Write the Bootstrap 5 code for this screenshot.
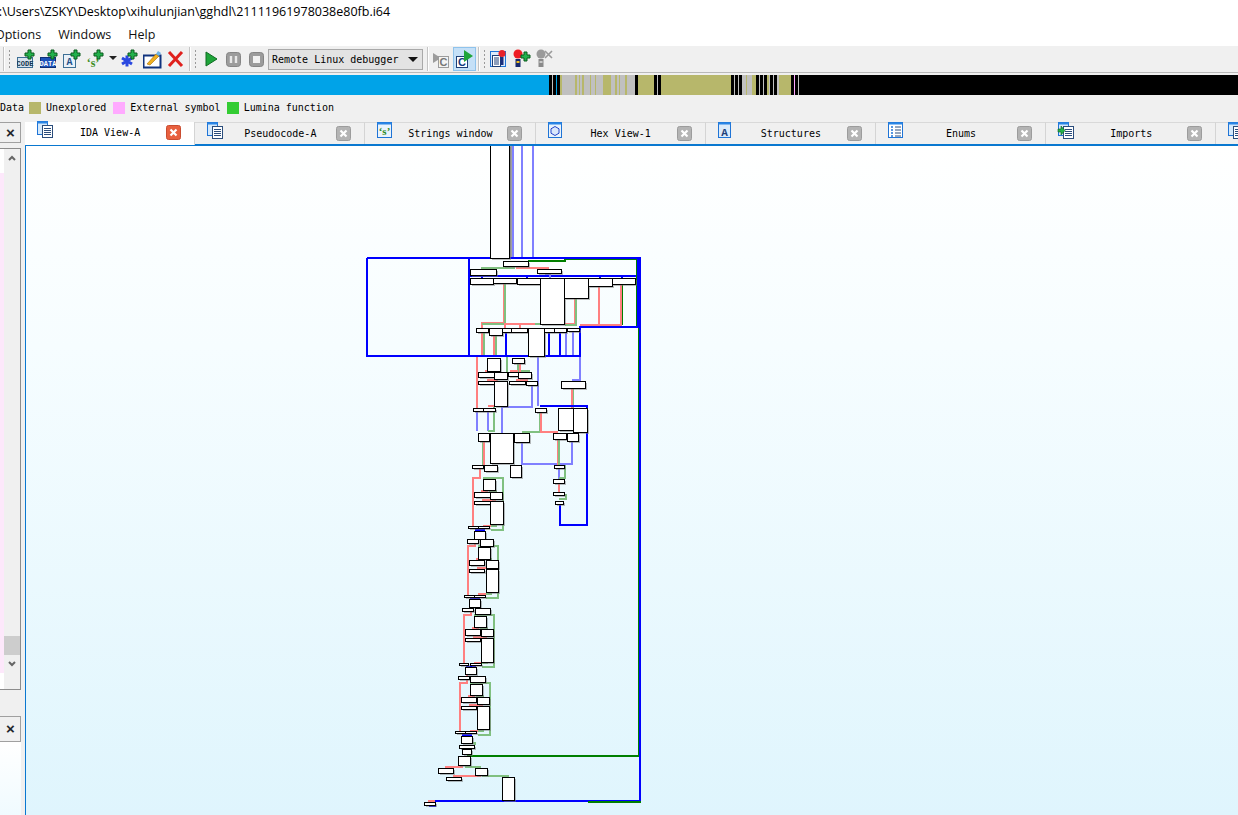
<!DOCTYPE html>
<html lang="en">
<head>
    <meta charset="UTF-8">
    <meta name="viewport" content="width=device-width, initial-scale=1.0">
    <title>IDA - 21111961978038e80fb.i64</title>
    <link href="https://cdn.jsdelivr.net/npm/bootstrap@5.3.0/dist/css/bootstrap.min.css" rel="stylesheet">
    <style>
        html, body { height: 815px; overflow: hidden; background: #f0f0f0; }
        .app-shell { height: 815px; width: 1238px; overflow: hidden; }
        .title-row { height: 24px; background: #fff; font: 12.5px/24px "Open Sans", sans-serif; color: #000; white-space: nowrap; margin-left: -9px; }
        .menu-row { height: 21px; background: #fff; font: 12.5px/21px "Open Sans", sans-serif; color: #111; margin-left: -5px; gap: 17px; }
        .tool-row { height: 28px; background: #f0f0f0; border-top: 1px solid #fff; border-bottom: 1px solid #b9b9b9; padding-left: 3px; }
        .tool-sep { width: 2px; height: 24px; border-left: 1px solid #c4c4c4; border-right: 1px solid #fff; flex: none; }
        .tool-grip { width: 3px; height: 20px; flex: none; margin: 0 2px 0 3px; background-image: radial-gradient(#9a9a9a 1px, transparent 1px); background-size: 3px 4px; }
        .tool-ic { flex: none; display: block; }
        .tool-ic-gap { margin-left: 4px; }
        .tool-ic-play { margin-left: 6px; }
        .tool-ic-dbg { margin-left: 8px; }
        .tool-ic-bp { margin-left: 5px; }
        .tool-ic-c { margin-left: 3px; }
        .tool-ic-first { margin-left: 2px; }
        .tool-ic-plusbp { margin-left: 6px; }
        .debug-combo { width: 155px; height: 21px; flex: none; margin-left: 4px; background: #e3e3e3; border: 1px solid #a9a9a9; font: 10px/19px "DejaVu Sans Mono", monospace; padding-left: 3px; color: #000; position: relative; }
        .debug-combo::after { content: ""; position: absolute; right: 4px; top: 7px; border: 5px solid transparent; border-top: 5px solid #111; border-bottom: 0; }
        .drop-arrow { width: 0; height: 0; flex: none; border: 4px solid transparent; border-top: 4px solid #222; border-bottom: 0; margin: 0 3px 2px 4px; }
        .sel-ic { background: #c5e0f7; border: 1px solid #8fc3ec; height: 24px; width: 23px; flex: none; margin-left: 3px; }
        .sel-sep { margin-left: 2px; }
        .nav-strip { display: block; margin-top: 2px; height: 20px; width: 1238px; }
        .legend-row { height: 27px; font: 10px/24px "DejaVu Sans Mono", monospace; color: #000; padding-bottom: 1px; }
        .legend-box { width: 12px; height: 12px; flex: none; margin-left: 6px; margin-right: 5px; }
        .legend-tan { background: #b7b76b; margin-left: 5px; }
        .legend-pink { background: #ffaaff; margin-left: 7px; }
        .legend-lime { background: #33cc33; }
        .work-row { height: 693px; }
        .side-col { width: 25px; flex: none; }
        .side-close { width: 21px; height: 21px; border: 1px solid #a0a0a0; border-left: 0; background: #f0f0f0; font: 700 15px/19px "Liberation Sans", sans-serif; text-align: center; padding-left: 1px; }
        .side-panel { width: 21px; height: 542px; margin-top: 5px; border: 1px solid #8c8c8c; border-left: 0; background: #fff; }
        .side-pink { width: 4px; margin-top: 24px; height: 500px; background: #fde8fb; flex: none; }
        .side-scroll { width: 16px; flex: none; background: #f0f0f0; height: 100%; position: relative; }
        .side-thumb { position: absolute; top: 487px; left: 0; right: 0; height: 19px; background: #cdcdcd; }
        .side-chev { position: absolute; left: 4px; display: block; }
        .side-chev-up { top: 6px; }
        .side-chev-down { top: 512px; }
        .side-close-b { margin-top: 26px; height: 26px; line-height: 24px; }
        .side-foot { width: 21px; height: 73px; background: linear-gradient(#fff, #f0fbff); }
        .tab-row { height: 22px; }
        .tab-item { width: 170.2px; height: 22px; flex: none; background: #f0f0f0; border-right: 1px solid #d4d4d4; border-top: 1px solid #d9d9d9; font: 10px/21px "DejaVu Sans Mono", monospace; color: #000; }
        .tab-item.tab-on { background: #fff; border-top: 0; height: 23px; position: relative; z-index: 2; }
        .tab-ic { margin-left: 11px; margin-top: -1px; flex: none; width: 18px; height: 17px; }
        .tab-name { flex: 1 1 auto; text-align: center; white-space: nowrap; }
        .tab-x { width: 15px; height: 15px; flex: none; margin-right: 13px; margin-top: 3px; }
        .graph-pane { height: 671px; width: 1213px; border-top: 2px solid #0a78d0; border-left: 1px solid #0a78d0; background: linear-gradient(#fff 0, #f6fdff 30%, #dff5fd 100%); }
        .graph-svg { display: block; }
    </style>
</head>
<body>
    <svg width="0" height="0" class="position-absolute">
        <defs>
            <symbol id="i-plus" viewBox="0 0 11 11"><path d="M4 1h3v3h3v3H7v3H4V7H1V4h3z" fill="#22b14c" stroke="#0a5a1c" stroke-width="1"/></symbol>
            <symbol id="i-page" viewBox="0 0 18 17">
                <rect x="1.5" y="0.5" width="10" height="13" fill="#d5e9fb" stroke="#1f74d6"/>
                <rect x="1.5" y="0.5" width="10" height="2" fill="#2a86e6"/>
                <rect x="6.5" y="4.5" width="10" height="12" fill="#fff" stroke="#2b4d7c"/>
                <path d="M8 7.5h7M8 9.5h7M8 11.5h7M8 13.5h7" stroke="#2b4d7c"/>
            </symbol>
            <symbol id="i-close" viewBox="0 0 15 15"><rect x="0.5" y="0.5" width="14" height="14" rx="2" fill="#b4b4b4" stroke="#9c9c9c"/><path d="M4.5 4.5l6 6M10.5 4.5l-6 6" stroke="#fff" stroke-width="2.2"/></symbol>
            <symbol id="i-close-on" viewBox="0 0 15 15"><rect x="0.5" y="0.5" width="14" height="14" rx="2" fill="#e8603f" stroke="#c94c30"/><path d="M4.5 4.5l6 6M10.5 4.5l-6 6" stroke="#fff" stroke-width="2.2"/></symbol>
        </defs>
    </svg>

    <div class="app-shell d-flex flex-column">
        <div class="title-row">C:\Users\ZSKY\Desktop\xihulunjian\gghdl\21111961978038e80fb.i64</div>
        <div class="menu-row d-flex"><span>Options</span><span>Windows</span><span>Help</span></div>

        <div class="tool-row d-flex align-items-center">
            <div class="tool-sep"></div>
            <div class="tool-grip"></div>
            <svg class="tool-ic tool-ic-gap" width="19" height="20" viewBox="0 0 19 20"><rect x="0.5" y="8.5" width="15" height="10" fill="#d7e3ee" stroke="#3d6f95"/><text x="8" y="16.5" font-family="Liberation Mono, monospace" font-size="7" font-weight="700" text-anchor="middle" fill="#12344f">CODE</text><use href="#i-plus" x="7" y="0" width="11" height="11"/></svg>
            <svg class="tool-ic tool-ic-gap" width="19" height="20" viewBox="0 0 19 20"><rect x="0.5" y="8.5" width="15" height="10" fill="#1c52b8" stroke="#0d2f77"/><text x="8" y="16.5" font-family="Liberation Mono, monospace" font-size="7" font-weight="700" text-anchor="middle" fill="#fff">DATA</text><use href="#i-plus" x="7" y="0" width="11" height="11"/></svg>
            <svg class="tool-ic tool-ic-gap" width="19" height="20" viewBox="0 0 19 20"><rect x="0.5" y="5.5" width="12" height="13" fill="#e8f0f8" stroke="#3d6f95"/><text x="6.5" y="16" font-family="Liberation Mono, monospace" font-size="10" font-weight="700" text-anchor="middle" fill="#1c4f88">A</text><use href="#i-plus" x="7" y="0" width="11" height="11"/></svg>
            <svg class="tool-ic tool-ic-gap" width="19" height="20" viewBox="0 0 19 20"><text x="7" y="18" font-family="Liberation Serif, serif" font-size="12" font-weight="700" text-anchor="middle" fill="#3f8f1f">‘s’</text><use href="#i-plus" x="7" y="0" width="11" height="11"/></svg>
            <div class="drop-arrow"></div>
            <svg class="tool-ic" width="19" height="20" viewBox="0 0 19 20"><path d="M7 6.5v11M2 9l10 6M12 9L2 15" stroke="#2a48e0" stroke-width="3"/><use href="#i-plus" x="7" y="0" width="11" height="11"/></svg>
            <svg class="tool-ic tool-ic-gap" width="19" height="20" viewBox="0 0 19 20"><rect x="0.5" y="6.5" width="17" height="12" fill="#fff" stroke="#10337e" stroke-width="2"/><path d="M4 15l9-10 3 2-9 9z" fill="#f0b020" stroke="#a86a00" stroke-width=".6"/><path d="M13 5l2-3 3 2-2 3z" fill="#6cb4e8"/></svg>
            <svg class="tool-ic tool-ic-gap" width="19" height="20" viewBox="0 0 19 20"><path d="M3 3l13 14M16 3L3 17" stroke="#e0201c" stroke-width="3"/></svg>
            <div class="tool-sep tool-ic-gap"></div>
            <div class="tool-grip"></div>
            <svg class="tool-ic tool-ic-play" width="13" height="16" viewBox="0 0 13 16"><path d="M1 1l11 7-11 7z" fill="#1fa53a" stroke="#0f6d22"/></svg>
            <svg class="tool-ic tool-ic-dbg" width="15" height="15" viewBox="0 0 15 15"><rect x="0.5" y="0.5" width="14" height="14" rx="3" fill="#9c9c9c" stroke="#858585"/><path d="M5 4v7M10 4v7" stroke="#e8e8e8" stroke-width="2.4"/></svg>
            <svg class="tool-ic tool-ic-dbg" width="15" height="15" viewBox="0 0 15 15"><rect x="0.5" y="0.5" width="14" height="14" rx="3" fill="#9c9c9c" stroke="#858585"/><rect x="4" y="4" width="7" height="7" fill="#f2f2f2"/></svg>
            <div class="debug-combo">Remote Linux debugger</div>
            <div class="tool-sep ms-1"></div>
            <svg class="tool-ic tool-ic-c" width="18" height="20" viewBox="0 0 18 20"><path d="M1 4l8 5-8 5z" fill="#9c9c9c"/><rect x="6.5" y="7.5" width="10" height="11" fill="#f4f4f4" stroke="#9c9c9c"/><text x="11.5" y="17" font-family="Liberation Sans, sans-serif" font-size="11" font-weight="700" text-anchor="middle" fill="#777">C</text></svg>
            <div class="sel-ic d-flex align-items-center justify-content-center">
                <svg width="19" height="20" viewBox="0 0 19 20"><rect x="1.5" y="7.5" width="11" height="11" fill="#fff" stroke="#1d3f78"/><text x="7" y="17" font-family="Liberation Sans, sans-serif" font-size="11" font-weight="700" text-anchor="middle" fill="#123a80">C</text><path d="M9 1l9 6-9 6z" fill="#1fa53a"/></svg>
            </div>
            <div class="tool-sep sel-sep"></div>
            <div class="tool-grip"></div>
            <svg class="tool-ic tool-ic-first" width="17" height="20" viewBox="0 0 17 20"><rect x="0.5" y="2.5" width="15" height="15" fill="#dceafa" stroke="#1f74d6"/><rect x="2.5" y="6.5" width="8" height="11" fill="#fff" stroke="#1d3f78"/><path d="M4 9h5M4 11h5M4 13h5M4 15h5" stroke="#1d3f78"/><circle cx="12" cy="4.500" r="3.500" fill="#e8222a"/><rect x="10.500" y="8" width="3" height="8" fill="#1c2f7c"/></svg>
            <svg class="tool-ic tool-ic-plusbp" width="18" height="20" viewBox="0 0 18 20"><circle cx="5" cy="5" r="4.500" fill="#ee1c24"/><rect x="2.500" y="10" width="5" height="8" fill="#17296e"/><rect x="3.500" y="12" width="3" height="2" fill="#f0c020"/><use href="#i-plus" x="7" y="2" width="11" height="11"/></svg>
            <svg class="tool-ic tool-ic-bp" width="18" height="20" viewBox="0 0 18 20"><circle cx="5" cy="5" r="4.500" fill="#9a9a9a"/><rect x="2.500" y="10" width="5" height="8" fill="#8a8a8a"/><rect x="3.500" y="12" width="3" height="2" fill="#c9c9c9"/><path d="M9 2l7 7M16 2L9 9" stroke="#9a9a9a" stroke-width="1.600"/></svg>
        </div>

        <svg id="navStrip" class="nav-strip" viewBox="0 0 1238 20" shape-rendering="crispEdges"></svg>

        <div class="legend-row d-flex align-items-center">
            <span>Data</span>
            <span class="legend-box legend-tan"></span><span>Unexplored</span>
            <span class="legend-box legend-pink"></span><span>External symbol</span>
            <span class="legend-box legend-lime"></span><span>Lumina function</span>
        </div>

        <div class="work-row d-flex">
            <div class="side-col">
                <div class="side-close">×</div>
                <div class="side-panel d-flex">
                    <div class="side-pink"></div>
                    <div class="side-scroll">
                        <svg class="side-chev side-chev-up" width="8" height="6" viewBox="0 0 8 6"><path d="M1 5l3-3 3 3" fill="none" stroke="#666" stroke-width="2"/></svg>
                        <div class="side-thumb"></div>
                        <svg class="side-chev side-chev-down" width="8" height="6" viewBox="0 0 8 6"><path d="M1 1l3 3 3-3" fill="none" stroke="#666" stroke-width="2"/></svg>
                    </div>
                </div>
                <div class="side-close side-close-b">×</div>
                <div class="side-foot"></div>
            </div>
            <div class="flex-grow-1">
                <div id="tabRow" class="tab-row d-flex"></div>
                <div class="graph-pane">
                    <svg id="graph" class="graph-svg" width="1212" height="669" viewBox="26 146 1212 669" shape-rendering="crispEdges"></svg>
                </div>
            </div>
        </div>
    </div>

    <script src="https://cdn.jsdelivr.net/npm/bootstrap@5.3.0/dist/js/bootstrap.bundle.min.js"></script>
    <script>
        // navigator band, widths in 1/3 px from x=545
        const K = '#b7b76b', G = '#c0c0c0', B = '#000', L = '#00a3e8', P = '#ffaaff';
        const bands = [[L,12],[B,9],[G,3],[B,9],[L,3],[B,9],[K,6],[G,39],[K,6],[G,6],[K,3],[G,6],[K,6],[G,18],[K,3],[G,12],[K,3],[G,21],[K,24],[G,12],[K,6],[G,6],[K,3],[G,15],[K,6],[G,24],[B,9],[K,48],[B,9],[G,3],[B,9],[K,210],[B,9],[G,3],[B,9],[G,3],[B,9],[G,12],[K,3],[G,15],[K,12],[B,9],[G,3],[B,9],[G,3],[B,9],[K,6],[G,3],[B,9],[G,3],[B,9],[G,6],[K,36],[B,9],[G,1],[P,3],[B,9],[G,3],[B,9]];
        let nav = '<rect x="0" y="0" width="545" height="20" fill="' + L + '"/>', nx = 545;
        bands.forEach(function(b) {
            nav += '<rect x="' + nx.toFixed(2) + '" y="0" width="' + (b[1] / 3).toFixed(2) + '" height="20" fill="' + b[0] + '"/>';
            nx += b[1] / 3;
        });
        nav += '<rect x="' + nx.toFixed(2) + '" y="0" width="' + (1238 - nx).toFixed(2) + '" height="20" fill="#000"/>';
        document.getElementById('navStrip').innerHTML = nav;

        // tabs
        const tabIcons = {
            page: '<use href="#i-page"/>',
            str: '<rect x="1.500" y="0.500" width="14" height="15" fill="#eaf3fc" stroke="#1f74d6"/><rect x="1.500" y="0.500" width="14" height="2" fill="#2a86e6"/><text x="8.500" y="13" font-family="Liberation Serif, serif" font-size="11" font-weight="700" text-anchor="middle" fill="#2f8a1c">‘s’</text>',
            hex: '<rect x="1.500" y="0.500" width="13" height="15" fill="#eaf3fc" stroke="#1f74d6"/><rect x="1.500" y="0.500" width="13" height="2" fill="#2a86e6"/><path d="M8 4.500l4 2.300v4.400l-4 2.300-4-2.300V6.800z" fill="#dbe8fb" stroke="#2444c8"/>',
            struc: '<rect x="1.500" y="0.500" width="12" height="15" fill="#dcebfa" stroke="#1f74d6"/><rect x="1.500" y="0.500" width="12" height="2" fill="#2a86e6"/><text x="7.500" y="13.500" font-family="Liberation Mono, monospace" font-size="11" font-weight="700" text-anchor="middle" fill="#1d3f78">A</text>',
            enum: '<rect x="1.500" y="0.500" width="14" height="15" fill="#fff" stroke="#1f74d6"/><rect x="1.500" y="0.500" width="14" height="2" fill="#2a86e6"/><path d="M4 5h2M4 8h2M4 11h2M4 14h2" stroke="#1f74d6" stroke-width="1.400"/><path d="M8 5h6M8 8h6M8 11h6M8 14h6" stroke="#2b4d7c"/>',
            imp: '<use href="#i-page"/><path d="M1 7h3V4l4 4.500L4 13v-3H1z" fill="#22b14c" stroke="#0a5a1c" stroke-width=".6"/>'
        };
        const tabs = [['IDA View-A','page'],['Pseudocode-A','page'],['Strings window','str'],['Hex View-1','hex'],['Structures','struc'],['Enums','enum'],['Imports','imp'],['','page']];
        document.getElementById('tabRow').innerHTML = tabs.map(function(t, i) {
            return '<div class="tab-item d-flex' + (i === 0 ? ' tab-on' : '') + '">' +
                '<svg class="tab-ic" viewBox="0 0 18 17">' + tabIcons[t[1]] + '</svg>' +
                '<div class="tab-name">' + t[0] + '</div>' +
                '<svg class="tab-x"><use href="#' + (i === 0 ? 'i-close-on' : 'i-close') + '"/></svg></div>';
        }).join('');

        // flow graph, screen coordinates
        const R = '#ff8080', N = '#80c080', U = '#8080ff', BL = '#0000ff', DG = '#007f00';
        const edges = [
            ['#a0a0a0','511,146 511,258'],[U,'513,146 513,258'],[U,'522,146 522,258'],[U,'533,146 533,258'],
            [N,'482,269 482,268 515,268'],[R,'516,268 548,268 548,269'],
            [DG,'528,261 565,261 565,259 637,259 637,327 600,327'],[DG,'622,284 622,325'],
            [R,'504,284 504,323 482,323 482,328'],[N,'505,284 505,324 482,324'],
            [R,'505,328 505,324 540,324'],[R,'520,328 520,324'],[N,'535,324 564,324'],
            [R,'575,298 575,324 565,324'],[N,'576,298 576,325 565,325'],[R,'599,286 599,325 580,325'],[R,'621,284 621,325 600,325'],
            [BL,'470,276 636,276'],[U,'545,274 550,274 550,278'],[BL,'482,276 482,278'],[BL,'527,276 527,278'],[BL,'600,276 600,278'],[BL,'622,276 622,278'],
            [R,'482,332 482,356'],[N,'484,332 484,356'],[R,'494,335 494,356'],[N,'496,335 496,356'],
            [BL,'506,332 506,356'],[BL,'549,332 549,356'],[BL,'560,332 560,356'],[U,'566,332 566,356'],[U,'573,332 573,356'],
            [R,'477,356 477,408'],[N,'507,356 507,380'],[U,'538,356 538,406'],[U,'580,356 580,380 572,380'],
            [N,'493,371 493,372'],[R,'485,371 493,371'],[N,'518,364 518,372'],[R,'520,364 520,372'],[R,'510,371 518,371'],[N,'521,371 530,371'],
            [R,'516,380 528,380'],[R,'487,380 498,380'],
            [U,'532,386 532,407 502,407 502,433'],[U,'477,411 477,431'],[U,'488,411 488,431'],[N,'494,406 494,431 488,431'],[R,'488,406 494,406'],
            [N,'540,412 540,432 522,432'],[R,'541,412 541,432 558,432'],[N,'573,388 573,408'],[R,'572,388 572,408'],
            [N,'483,441 483,465'],[R,'484,441 484,465'],[U,'522,442 522,464 572,464 572,441'],
            [R,'558,439 558,465'],[N,'559,439 559,465'],[U,'559,468 559,479'],[N,'565,465 565,478 559,478'],
            [R,'559,483 559,492'],[N,'559,495 566,495 566,499 559,499'],
            [BL,'540,406 587,406 587,525 560,525 560,504'],
            [DG,'467,756 639,756 639,259'],[BL,'562,258 640,258 640,801 435,801'],[DG,'588,802 641,802'],
            [BL,'367,258 562,258'],[BL,'367,258 367,356 469,356'],[BL,'469,258 469,356 580,356 580,327 638,327 638,258'],
            [R,'445,767 463,767'],[N,'465,767 481,767'],[R,'453,776 481,776'],[N,'482,776 508,776 508,777'],
            [R,'428,801 435,801'],[BL,'429,806 435,806 435,802'],[N,'466,765 466,756'],[N,'470,743 475,743 475,745'],[R,'466,743 470,743'],[BL,'465,733 465,736']
        ];
        const blocks = [
            [490,145,19,113],[503,261,25,5],[470,269,26,6],[537,269,24,4],
            [470,278,23,6],[493,278,23,5],[517,278,23,6],[540,278,24,46],[564,278,24,20],[588,278,24,8],[612,278,23,6],
            [476,328,12,4],[489,328,13,7],[502,328,9,4],[511,328,16,4],[528,328,16,28],[544,328,10,4],[554,328,12,4],[567,328,12,3],
            [487,358,13,13],[512,358,12,5],[478,372,16,5],[494,372,13,7],[508,372,10,4],[518,372,13,6],
            [478,381,16,3],[509,381,16,3],[526,381,11,4],[494,381,13,25],[561,381,24,7],
            [473,408,10,3],[483,408,12,3],[535,408,11,4],[558,408,15,22],[573,408,14,24],
            [478,433,11,8],[490,433,23,30],[514,433,15,9],[553,433,13,6],[567,433,11,8],
            [472,465,11,3],[484,465,13,6],[510,465,11,12],[554,465,10,3],[553,479,11,4],
            [483,479,12,11],[553,492,11,3],[474,492,16,5],[490,492,12,7],[474,501,16,3],[490,501,13,23],[555,501,8,3],
            [468,526,10,2],[478,526,11,2],[474,531,11,8],
            [467,539,11,4],[480,539,13,7],[478,547,12,12],[469,560,15,5],[486,560,12,8],[469,569,15,3],[486,569,12,23],
            [464,595,10,2],[474,595,11,2],[469,599,11,8],[462,608,11,3],[475,608,15,6],
            [474,616,12,11],[465,629,15,6],[481,629,12,7],[465,638,15,3],[481,638,12,24],
            [459,663,9,2],[470,663,11,2],[465,667,11,7],[458,676,11,3],[470,676,15,6],
            [470,684,12,11],[461,697,15,5],[477,697,12,7],[461,706,15,3],[477,706,12,23],
            [455,731,10,2],[465,731,11,2],[461,736,11,7],[459,745,15,3],[462,749,9,5],[458,756,12,9],
            [438,768,15,5],[475,768,12,7],[446,777,15,3],[502,777,12,23],[424,802,11,3]
        ];
        // the four repeated switch-like modules share one edge shape
        [[483,479],[478,547],[474,616],[470,684]].forEach(function(m) {
            const x = m[0], y = m[1];
            edges.push(
                [R, (x - 3) + ',' + (y - 11) + ' ' + (x - 3) + ',' + (y - 1) + ' ' + (x - 10) + ',' + (y - 1) + ' ' + (x - 10) + ',' + (y + 48)],
                [N, x + ',' + (y - 1) + ' ' + (x + 20) + ',' + (y - 1) + ' ' + (x + 20) + ',' + (y + 51) + ' ' + (x + 8) + ',' + (y + 51)],
                [R, (x - 2) + ',' + (y + 12) + ' ' + (x + 5) + ',' + (y + 12)],
                [N, (x + 6) + ',' + (y + 12) + ' ' + (x + 14) + ',' + (y + 12)],
                [R, (x - 1) + ',' + (y + 21) + ' ' + (x + 13) + ',' + (y + 21)],
                [R, x + ',' + (y + 47) + ' ' + (x + 8) + ',' + (y + 47)],
                [N, (x + 8) + ',' + (y + 47) + ' ' + (x + 14) + ',' + (y + 47)],
                [BL, (x - 8) + ',' + (y + 51) + ' ' + (x + 2) + ',' + (y + 51)]
            );
        });
        let g = '';
        edges.forEach(function(e) {
            g += '<polyline points="' + e[1] + '" fill="none" stroke="' + e[0] + '" stroke-width="2"/>';
        });
        blocks.forEach(function(b) {
            g += '<rect x="' + (b[0] + 2) + '" y="' + (b[1] + 2) + '" width="' + b[2] + '" height="' + b[3] + '" fill="#777" fill-opacity=".5"/>';
        });
        blocks.forEach(function(b) {
            g += '<rect x="' + (b[0] + .5) + '" y="' + (b[1] + .5) + '" width="' + b[2] + '" height="' + b[3] + '" fill="#fff" stroke="#000"/>';
        });
        document.getElementById('graph').innerHTML = g;
    </script>
</body>
</html>
